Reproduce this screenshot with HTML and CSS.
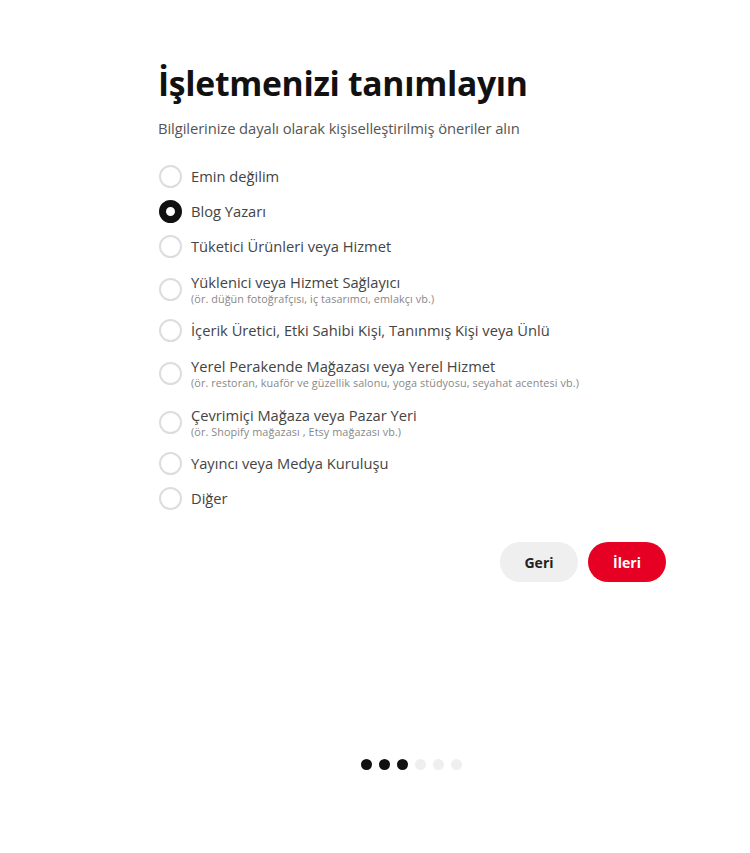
FILE: index.html
```html
<!DOCTYPE html>
<html lang="tr">
<head>
<meta charset="utf-8">
<link rel="stylesheet" href="styles.css">
</head>
<body>
<div class="page">
  <div class="content">
    <h1 class="title">İşletmenizi tanımlayın</h1>
    <p class="subtitle">Bilgilerinize dayalı olarak kişiselleştirilmiş öneriler alın</p>
    <div class="options">
      <div class="option"><span class="radio"></span><div class="label"><div class="main">Emin değilim</div></div></div>
      <div class="option"><span class="radio checked"></span><div class="label"><div class="main">Blog Yazarı</div></div></div>
      <div class="option"><span class="radio"></span><div class="label"><div class="main">Tüketici Ürünleri veya Hizmet</div></div></div>
      <div class="option two"><span class="radio"></span><div class="label"><div class="main">Yüklenici veya Hizmet Sağlayıcı</div><div class="sub">(ör. düğün fotoğrafçısı, iç tasarımcı, emlakçı vb.)</div></div></div>
      <div class="option"><span class="radio"></span><div class="label"><div class="main">İçerik Üretici, Etki Sahibi Kişi, Tanınmış Kişi veya Ünlü</div></div></div>
      <div class="option two"><span class="radio"></span><div class="label"><div class="main">Yerel Perakende Mağazası veya Yerel Hizmet</div><div class="sub">(ör. restoran, kuaför ve güzellik salonu, yoga stüdyosu, seyahat acentesi vb.)</div></div></div>
      <div class="option two"><span class="radio"></span><div class="label"><div class="main">Çevrimiçi Mağaza veya Pazar Yeri</div><div class="sub">(ör. Shopify mağazası , Etsy mağazası vb.)</div></div></div>
      <div class="option"><span class="radio"></span><div class="label"><div class="main">Yayıncı veya Medya Kuruluşu</div></div></div>
      <div class="option"><span class="radio"></span><div class="label"><div class="main">Diğer</div></div></div>
    </div>
    <div class="actions">
      <button class="btn back">Geri</button>
      <button class="btn next">İleri</button>
    </div>
  </div>
  <div class="dots">
    <span class="dot on"></span><span class="dot on"></span><span class="dot on"></span><span class="dot"></span><span class="dot"></span><span class="dot"></span>
  </div>
</div>
</body>
</html>
```
FILE: styles.css
```css
* { box-sizing: border-box; }
html, body { margin: 0; padding: 0; background: #fff; }
body { font-family: "Open Sans", "Noto Sans", sans-serif; color: #333; }
.page { width: 750px; height: 853px; padding-top: 58px; }
.content { margin-left: 158px; width: 508px; }
.title { margin: 0; font-size: 33.7px; line-height: 50px; font-weight: 700; color: #111; letter-spacing: -0.3px; }
.subtitle { margin: 10px 0 0; font-size: 14.8px; line-height: 20px; color: #555; letter-spacing: -0.1px; }
.options { margin-top: 21px; display: flex; flex-direction: column; }
.option { display: flex; align-items: center; min-height: 35px; }
.option.two { min-height: 44px; margin: 3px 0 2px; }
.radio { flex: 0 0 auto; width: 23px; height: 23px; border-radius: 50%; border: 2px solid #ddd; margin-left: 1px; margin-right: 9px; }
.radio.checked { border: 7px solid #111; }
.label { display: flex; flex-direction: column; }
.main { font-size: 14.7px; line-height: 19px; color: #444; }
.sub { font-size: 10.8px; line-height: 14px; color: #888; letter-spacing: 0.1px; }
.actions { display: flex; justify-content: flex-end; gap: 10px; margin-top: 26px; }
.btn { border: 0; height: 40px; width: 78px; border-radius: 20px; font-family: inherit; font-size: 14px; font-weight: 700; }
.back { background: #efefef; color: #222; }
.next { background: #e60023; color: #fff; }
.dots { display: flex; justify-content: center; gap: 7px; margin-top: 177px; padding-left: 72px; }
.dot { width: 11px; height: 11px; border-radius: 50%; background: #efefef; }
.dot.on { background: #111; }
```
